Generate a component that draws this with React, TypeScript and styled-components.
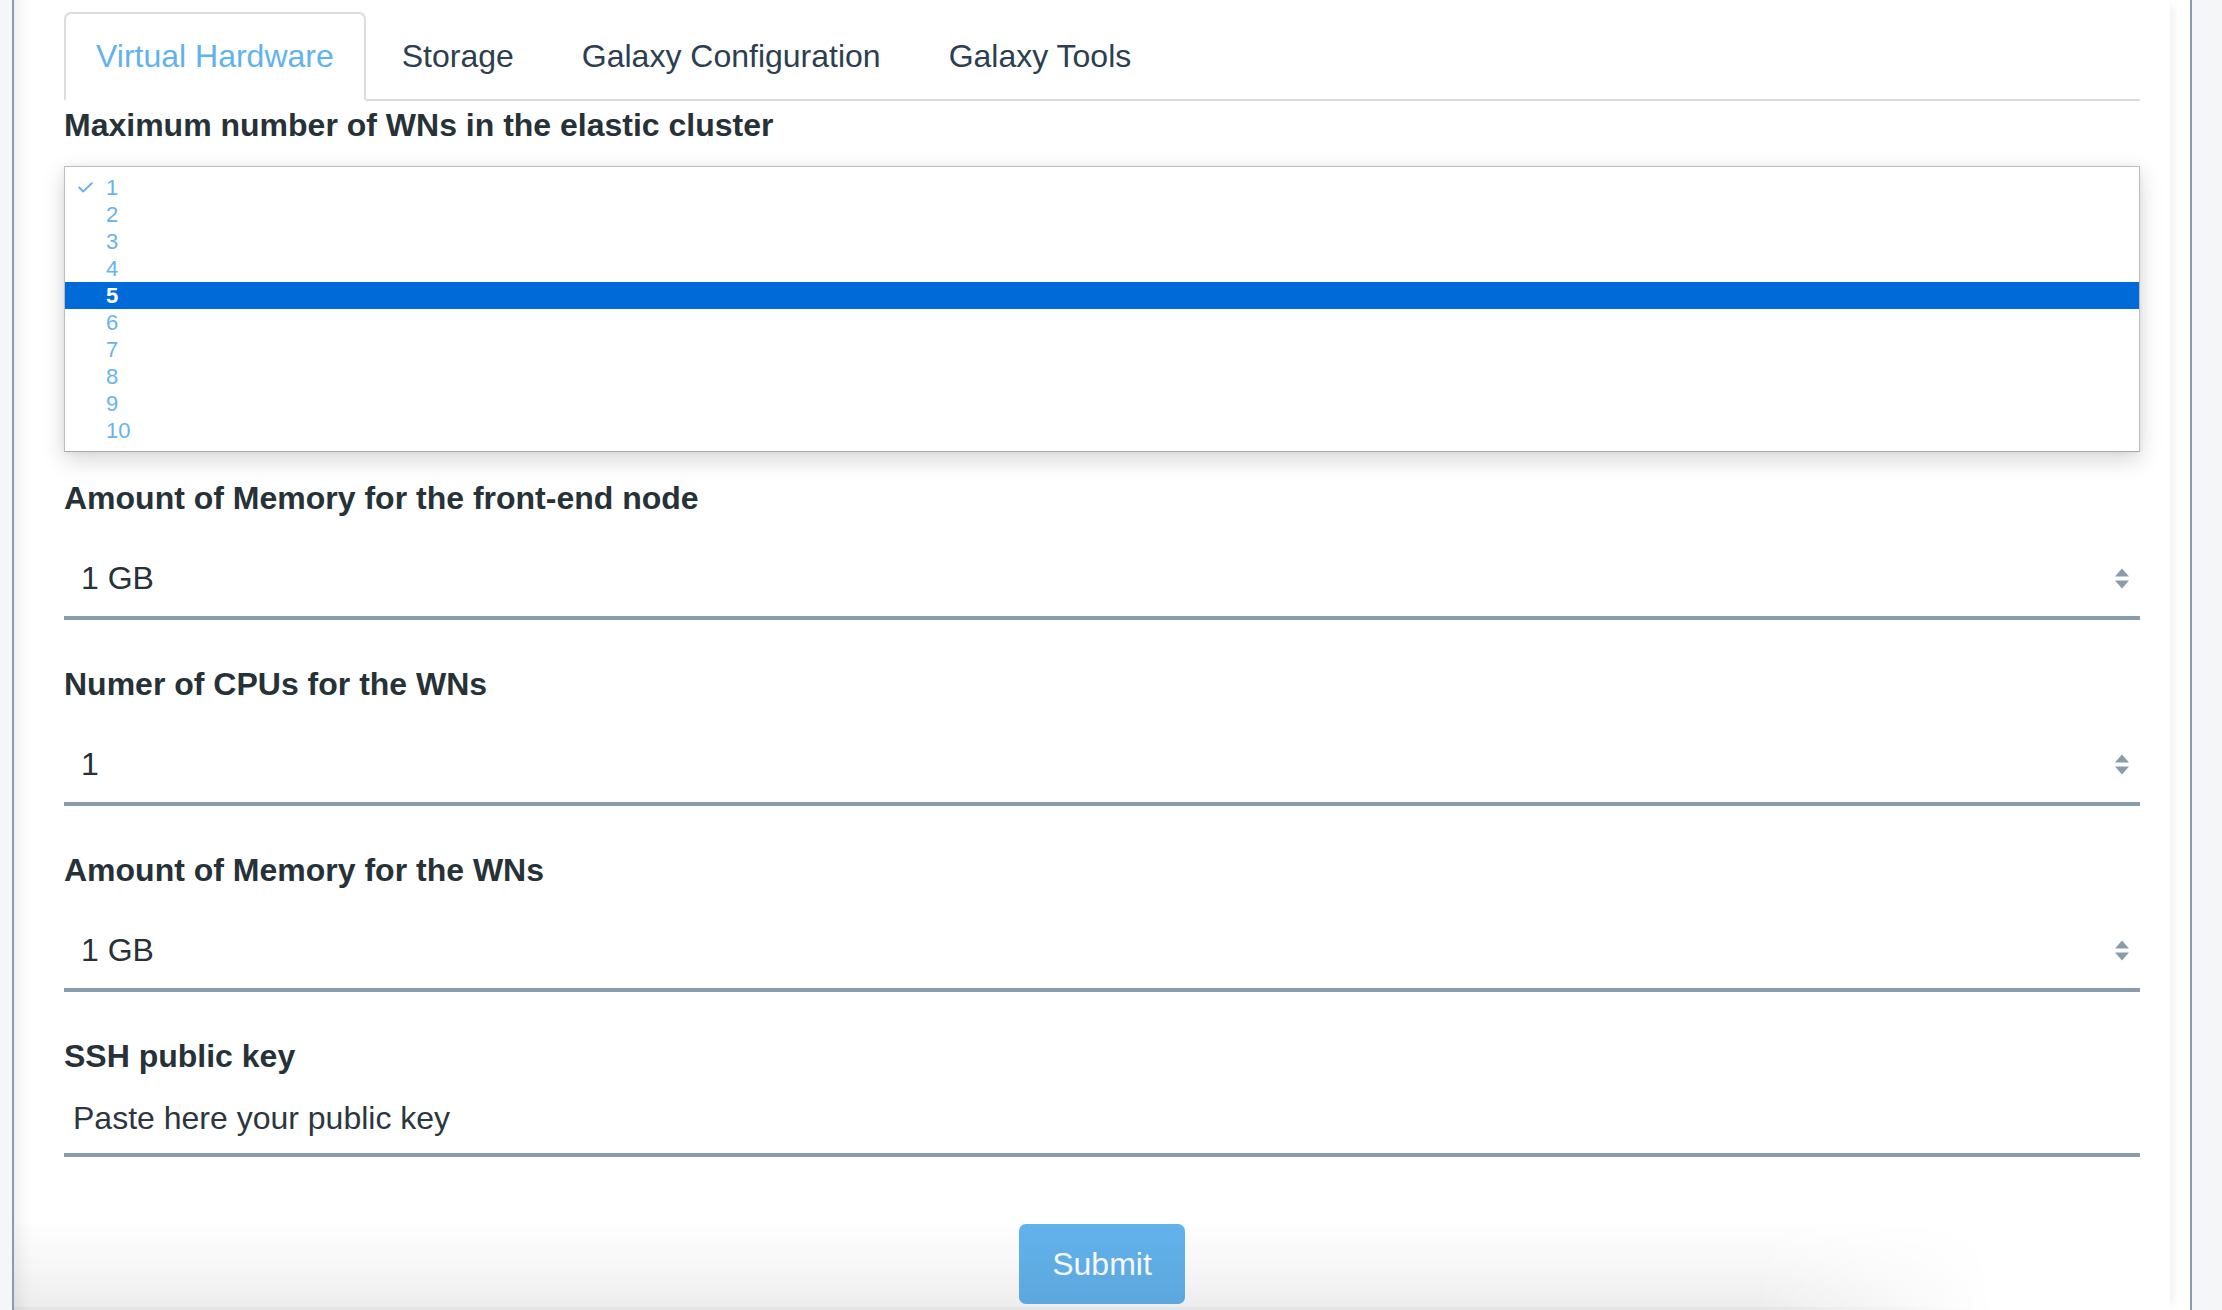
import React from "react";
import styled, { createGlobalStyle } from "styled-components";

const GlobalStyle = createGlobalStyle`
  html, body {
    margin: 0;
    padding: 0;
    height: 100%;
    overflow: hidden;
    background: #f5f6f8;
  }
  body {
    font-family: "Liberation Sans", Arial, Helvetica, sans-serif;
  }
  #root { height: 100%; }
`;

const Viewport = styled.div`
  position: relative;
  width: 2222px;
  height: 1310px;
  box-sizing: border-box;
  padding-left: 12px;
  display: flex;
  overflow: hidden;
`;

const Frame = styled.div`
  width: 2180px;
  height: 100%;
  box-sizing: border-box;
  border-left: 2px solid #8a9bac;
  border-right: 2px solid #8a9bac;
  background: linear-gradient(to right, #eef0f2 0, #fafafa 10px, #ffffff 19px);
  padding-left: 19px;
  display: flex;
`;

const Card = styled.main`
  width: 2137px;
  height: 100%;
  box-sizing: border-box;
  background: #ffffff;
  box-shadow: 8px 0 10px -6px rgba(0, 0, 0, 0.08);
  padding: 12px 30px 0 31px;
  display: flex;
  flex-direction: column;
`;

const TabBar = styled.nav`
  display: flex;
  border-bottom: 2px solid #dcdcdc;
`;

const Tab = styled.div<{ $active?: boolean }>`
  margin-right: 4px;
  margin-bottom: -2px;
  padding: 18px 30px 19px;
  font-size: 32px;
  line-height: 48px;
  border: 2px solid ${(p) => (p.$active ? "#dcdcdc" : "transparent")};
  border-bottom-color: ${(p) => (p.$active ? "#ffffff" : "transparent")};
  border-radius: 7px 7px 0 0;
  background: ${(p) => (p.$active ? "#ffffff" : "transparent")};
  color: ${(p) => (p.$active ? "#62b2ee" : "#2c3e50")};
  cursor: pointer;
`;

const Label = styled.div<{ $gap?: number }>`
  margin-top: ${(p) => p.$gap ?? 0}px;
  font-size: 32px;
  line-height: 48px;
  font-weight: 700;
  color: #263238;
`;

const OptionList = styled.div`
  margin-top: 17px;
  box-sizing: border-box;
  height: 286px;
  padding: 7px 0;
  background: #ffffff;
  border: 1px solid #bdbdbd;
  border-bottom-color: #a9a9a9;
  box-shadow: 0 8px 22px rgba(0, 0, 0, 0.16), 0 0 6px rgba(0, 0, 0, 0.06);
  display: flex;
  flex-direction: column;
`;

const OptionRow = styled.div<{ $highlight?: boolean }>`
  height: 27px;
  display: flex;
  align-items: center;
  font-size: 22px;
  background: ${(p) => (p.$highlight ? "#006ad8" : "transparent")};
  color: ${(p) => (p.$highlight ? "#ffffff" : "#68b3ee")};
  font-weight: ${(p) => (p.$highlight ? 700 : 400)};
`;

const CheckSlot = styled.span`
  width: 41px;
  box-sizing: border-box;
  padding-left: 13px;
  display: flex;
  align-items: center;
`;

const SelectBox = styled.div`
  margin-top: 18px;
  height: 80px;
  box-sizing: border-box;
  border-bottom: 4px solid #8a9bac;
  padding: 0 11px 0 17px;
  display: flex;
  align-items: center;
  justify-content: space-between;
  font-size: 32px;
  color: #263238;
`;

const KeyInput = styled.input`
  margin-top: 4px;
  height: 73px;
  width: 100%;
  box-sizing: border-box;
  border: none;
  border-bottom: 4px solid #8a9bac;
  outline: none;
  padding: 0 0 0 9px;
  font-family: "Liberation Sans", Arial, Helvetica, sans-serif;
  font-size: 32px;
  color: #263238;
  background: transparent;
  &::placeholder {
    color: #2c3640;
    opacity: 1;
  }
`;

const ButtonRow = styled.div`
  margin-top: 67px;
  display: flex;
  justify-content: center;
`;

const SubmitButton = styled.button`
  width: 166px;
  height: 80px;
  padding: 0;
  border: none;
  border-radius: 7px;
  background: #63b3ed;
  color: #ffffff;
  font-family: "Liberation Sans", Arial, Helvetica, sans-serif;
  font-size: 32px;
  line-height: 80px;
  cursor: pointer;
`;

const BottomShade = styled.div`
  position: absolute;
  left: 14px;
  bottom: 0;
  width: 1980px;
  height: 88px;
  pointer-events: none;
  background: linear-gradient(to bottom, rgba(0, 0, 0, 0) 0, rgba(0, 0, 0, 0.03) 50%, rgba(0, 0, 0, 0.07) 100%);
  border-bottom: 3px solid rgba(0, 0, 0, 0.1);
  -webkit-mask-image: linear-gradient(to right, #000 0, #000 88%, transparent 100%);
  mask-image: linear-gradient(to right, #000 0, #000 88%, transparent 100%);
`;

const Check = () => (
  <svg width="15" height="11" viewBox="0 0 15 11" fill="none">
    <path d="M1.2 5.6 L5.3 9.4 L13.8 1.2" stroke="#68b3ee" strokeWidth="2" strokeLinecap="round" strokeLinejoin="round" />
  </svg>
);

const Arrows = () => (
  <svg width="14" height="21" viewBox="0 0 14 21">
    <path d="M0 8.5 L7 0.5 L14 8.5 Z" fill="#8a9bac" />
    <path d="M0 12.5 L14 12.5 L7 20.5 Z" fill="#8a9bac" />
  </svg>
);

const tabs = ["Virtual Hardware", "Storage", "Galaxy Configuration", "Galaxy Tools"];
const options = [1, 2, 3, 4, 5, 6, 7, 8, 9, 10];

const Select = ({ value }: { value: string }) => (
  <SelectBox>
    <span>{value}</span>
    <Arrows />
  </SelectBox>
);

export default function App() {
  return (
    <>
      <GlobalStyle />
      <Viewport>
        <Frame>
          <Card>
            <TabBar>
              {tabs.map((t, i) => (
                <Tab key={t} $active={i === 0}>
                  {t}
                </Tab>
              ))}
            </TabBar>

            <Label>Maximum number of WNs in the elastic cluster</Label>
            <OptionList>
              {options.map((n) => (
                <OptionRow key={n} $highlight={n === 5}>
                  <CheckSlot>{n === 1 ? <Check /> : null}</CheckSlot>
                  <span>{n}</span>
                </OptionRow>
              ))}
            </OptionList>

            <Label $gap={22}>Amount of Memory for the front-end node</Label>
            <Select value="1 GB" />

            <Label $gap={40}>Numer of CPUs for the WNs</Label>
            <Select value="1" />

            <Label $gap={40}>Amount of Memory for the WNs</Label>
            <Select value="1 GB" />

            <Label $gap={40}>SSH public key</Label>
            <KeyInput placeholder="Paste here your public key" />

            <ButtonRow>
              <SubmitButton>Submit</SubmitButton>
            </ButtonRow>
          </Card>
        </Frame>
        <BottomShade />
      </Viewport>
    </>
  );
}
